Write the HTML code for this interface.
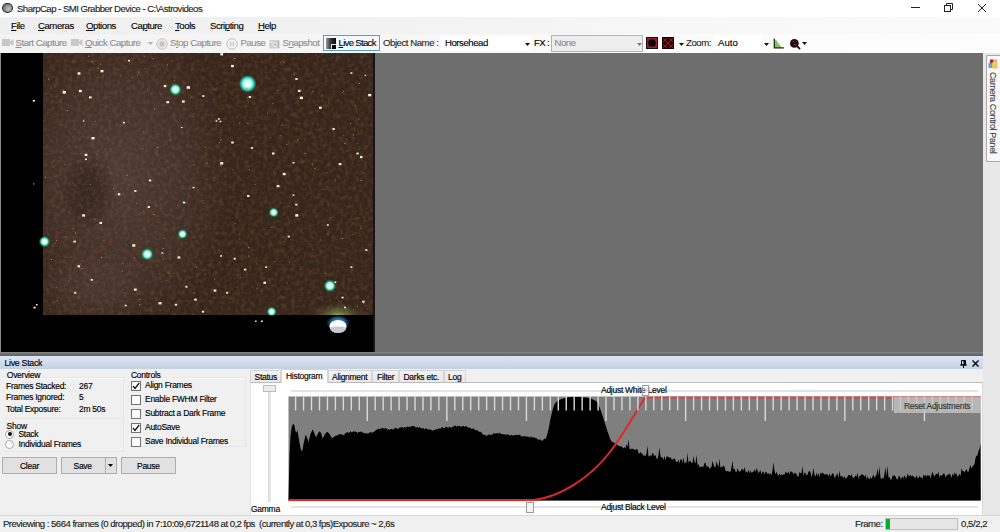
<!DOCTYPE html>
<html><head><meta charset="utf-8">
<style>
*{margin:0;padding:0;box-sizing:border-box}
html,body{width:1000px;height:532px;overflow:hidden;background:#f0f0f0}
body{position:relative;font-family:"Liberation Sans",sans-serif;color:#000}
.a{position:absolute}
.t{position:absolute;white-space:nowrap;font-size:9.6px;letter-spacing:-0.45px;line-height:9px;-webkit-text-stroke:0.12px currentColor}
.s{position:absolute;white-space:nowrap;font-size:8.5px;letter-spacing:-0.27px;line-height:8px;color:#000;-webkit-text-stroke:0.15px #000}
.u{text-decoration:underline;text-underline-offset:0.8px;text-decoration-thickness:0.8px}
#title{left:0;top:0;width:1000px;height:17px;background:#fff}
#menu{left:0;top:17px;width:1000px;height:17px;background:linear-gradient(90deg,#efefef 0%,#f2f2f2 40%,#f8f8f8 75%,#fafafa 100%)}
#tool{left:0;top:34px;width:1000px;height:19px;background:linear-gradient(90deg,#f3f3f3 0%,#f6f6f6 35%,#fbfbfb 65%,#fdfdfd 100%)}
.dis{color:#8e8e8e}
</style></head><body>
<!-- TITLE BAR -->
<div id="title" class="a">
  <div class="a" style="left:2px;top:2.9px;width:10.6px;height:10.5px;border-radius:50%;border:1.3px solid #2c2c2c;background:radial-gradient(circle at 62% 60%,#c4c8c4,#868c88 50%,#505450 100%)"></div>
  <div class="t" style="left:17px;top:4.2px;color:#1a1a1a;letter-spacing:-0.53px">SharpCap - SMI Grabber Device - C:\Astrovideos</div>
  <div class="a" style="left:911px;top:7px;width:9px;height:1px;background:#222"></div>
  <svg class="a" style="left:943px;top:3px" width="11" height="9" viewBox="0 0 11 9"><rect x="1.5" y="2.5" width="6" height="6" fill="none" stroke="#222"/><path d="M3.5 2.5V0.5H9.5V6.5H7.5" fill="none" stroke="#222"/></svg>
  <svg class="a" style="left:977px;top:3px" width="10" height="10" viewBox="0 0 10 10"><path d="M1 1L9 9M9 1L1 9" stroke="#222" stroke-width="1"/></svg>
</div>
<!-- MENU BAR -->
<div id="menu" class="a">
  <div class="t" style="left:11px;top:3.7px"><span class="u">F</span>ile</div>
  <div class="t" style="left:38px;top:3.7px"><span class="u">C</span>ameras</div>
  <div class="t" style="left:86px;top:3.7px"><span class="u">O</span>ptions</div>
  <div class="t" style="left:131px;top:3.7px">Ca<span class="u">p</span>ture</div>
  <div class="t" style="left:175px;top:3.7px"><span class="u">T</span>ools</div>
  <div class="t" style="left:210px;top:3.7px">Scri<span class="u">p</span>ting</div>
  <div class="t" style="left:258px;top:3.7px"><span class="u">H</span>elp</div>
</div>
<!-- TOOLBAR -->
<div id="tool" class="a">
  <!-- start capture icon -->
  <svg class="a" style="left:2px;top:4.4px" width="12" height="9" viewBox="0 0 12 9"><rect x="0" y="1" width="8" height="7" fill="#c8c8c8"/><path d="M8 3.5L11.5 1V8L8 5.5Z" fill="#c8c8c8"/></svg>
  <div class="t dis" style="left:15.5px;top:4.4px"><span class="u">S</span>tart Capture</div>
  <svg class="a" style="left:71px;top:4.4px" width="12" height="9" viewBox="0 0 12 9"><rect x="0" y="1" width="8" height="7" fill="#c8c8c8"/><path d="M8 3.5L11.5 1V8L8 5.5Z" fill="#c8c8c8"/></svg>
  <div class="t dis" style="left:85px;top:4.4px"><span class="u">Q</span>uick Capture</div>
  <svg class="a" style="left:148px;top:8px" width="5" height="3" viewBox="0 0 5 3"><path d="M0 0H5L2.5 3Z" fill="#b0b0b0"/></svg>
  <svg class="a" style="left:156px;top:4px" width="12" height="12" viewBox="0 0 12 12"><circle cx="6" cy="6" r="5.3" fill="#e8e8e8" stroke="#c8c8c8" stroke-width="1"/><rect x="3.6" y="3.4" width="4.8" height="5.2" rx="0.6" fill="#c4c4c4"/></svg>
  <div class="t dis" style="left:170px;top:4.4px">S<span class="u">t</span>op Capture</div>
  <svg class="a" style="left:226px;top:4px" width="12" height="12" viewBox="0 0 12 12"><circle cx="6" cy="6" r="5.3" fill="#f2f2f2" stroke="#c4c4c4" stroke-width="1"/><rect x="4.2" y="3.8" width="1" height="4.4" fill="#b8b8b8"/><rect x="6.8" y="3.8" width="1" height="4.4" fill="#b8b8b8"/></svg>
  <div class="t dis" style="left:240.5px;top:4.4px">Pause</div>
  <svg class="a" style="left:268.5px;top:4.5px" width="11" height="10" viewBox="0 0 11 10"><rect x="0.3" y="1" width="10.4" height="8.6" rx="1" fill="#cfcfcf"/><rect x="1.5" y="2.5" width="2" height="1.5" fill="#eee"/><circle cx="6" cy="5.6" r="2.6" fill="#e6e6e6"/><circle cx="6" cy="5.6" r="1.4" fill="#bdbdbd"/><rect x="8.5" y="2" width="1.5" height="6.5" fill="#b8b8b8"/></svg>
  <div class="t dis" style="left:282.5px;top:4.4px">S<span class="u">n</span>apshot</div>
  <!-- live stack button -->
  <div class="a" style="left:322.8px;top:1.2px;width:57.7px;height:15.5px;border:1px solid #5c9cbc;background:#f2f8fb"></div>
  <div class="a" style="left:325.5px;top:4px;width:10.5px;height:11px;background:linear-gradient(90deg,#9a9a9a 0%,#3a3a3a 45%,#0a0a0a 100%)"></div>
  <div class="a" style="left:330.5px;top:9.5px;width:5px;height:5.5px;background:#000;border:1px solid #e8e8e8;border-right:none;border-bottom:none"></div>
  <div class="t" style="left:338.5px;top:4.4px;letter-spacing:-0.7px"><span class="u">L</span>ive Stack</div>
  <div class="t" style="left:383px;top:4.4px;color:#1e1e1e">Object Name :</div>
  <div class="a" style="left:441px;top:2px;width:90px;height:15px;background:#fff"></div>
  <div class="t" style="left:445px;top:4.4px">Horsehead</div>
  <svg class="a" style="left:524.5px;top:8.5px" width="5" height="3" viewBox="0 0 5 3"><path d="M0 0H5L2.5 3Z" fill="#111"/></svg>
  <div class="t" style="left:534px;top:4.4px;letter-spacing:-0.6px">FX :</div>
  <div class="a" style="left:551px;top:1px;width:92px;height:16.5px;border:1px solid #b4b4b4;background:#eeeeee"></div>
  <div class="t dis" style="left:554.5px;top:4.4px;color:#8c8c8c">None</div>
  <svg class="a" style="left:636.5px;top:8.5px" width="5" height="3" viewBox="0 0 5 3"><path d="M0 0H5L2.5 3Z" fill="#777"/></svg>
  <!-- red icons -->
  <svg class="a" style="left:645.5px;top:3px" width="12" height="12" viewBox="0 0 12 12"><rect x="0" y="0" width="12" height="12" fill="#111"/><rect x="1" y="1" width="10" height="10" fill="#7a1422"/><rect x="1.8" y="1.8" width="8.4" height="8.4" fill="none" stroke="#c02a3c" stroke-width="0.6"/><circle cx="6" cy="6" r="3.6" fill="#050000"/></svg>
  <svg class="a" style="left:662px;top:3px" width="12" height="12" viewBox="0 0 12 12"><rect x="0" y="0" width="12" height="12" fill="#2a0205"/><path d="M0 0L12 12M12 0L0 12M0 6L6 0L12 6L6 12Z" stroke="#a0182a" stroke-width="0.9" fill="none"/><rect x="0.5" y="0.5" width="11" height="11" fill="none" stroke="#120000" stroke-width="1"/></svg>
  <svg class="a" style="left:678.5px;top:8.5px" width="5" height="3" viewBox="0 0 5 3"><path d="M0 0H5L2.5 3Z" fill="#111"/></svg>
  <div class="t" style="left:686px;top:4.4px;color:#1e1e1e">Zoom:</div>
  <div class="a" style="left:715px;top:2px;width:47px;height:15px;background:#fff"></div>
  <div class="t" style="left:718px;top:4.4px;letter-spacing:0">Auto</div>
  <svg class="a" style="left:763.5px;top:8.5px" width="5" height="3" viewBox="0 0 5 3"><path d="M0 0H5L2.5 3Z" fill="#111"/></svg>
  <!-- histogram icon -->
  <svg class="a" style="left:773px;top:4px" width="11" height="11" viewBox="0 0 11 11"><path d="M1.6 9.3V6 L2.4 1.5 L3.6 2.6 L5.5 5.4 L8 8.6 L8.5 9.3Z" fill="#86c060"/><path d="M1.3 0.5V9.8H10.8" fill="none" stroke="#14200c" stroke-width="1.2"/></svg>
  <!-- magnifier -->
  <svg class="a" style="left:789px;top:3.5px" width="12" height="12" viewBox="0 0 12 12"><circle cx="5.4" cy="5.4" r="4.4" fill="#2a0a0c"/><path d="M8 8L10.6 10.6" stroke="#2a0a0c" stroke-width="1.8" stroke-linecap="round"/><circle cx="4.6" cy="3.6" r="0.7" fill="#8a6a6a"/><circle cx="6" cy="6.6" r="0.7" fill="#8a6a6a"/></svg>
  <svg class="a" style="left:802px;top:8px" width="5" height="3" viewBox="0 0 5 3"><path d="M0 0H5L2.5 3Z" fill="#111"/></svg>

</div>
<!-- MAIN -->
<svg class="a" style="left:0;top:53px" width="375" height="299" viewBox="0 53 375 299">
<defs><radialGradient id="gg"><stop offset="0" stop-color="#ffffff"/><stop offset="0.38" stop-color="#d8fff0"/><stop offset="0.6" stop-color="#50e0b0"/><stop offset="0.82" stop-color="#1c8a60" stop-opacity="0.55"/><stop offset="1" stop-color="#1c7a58" stop-opacity="0"/></radialGradient><radialGradient id="gc"><stop offset="0" stop-color="#ffffff"/><stop offset="0.4" stop-color="#d0fff4"/><stop offset="0.65" stop-color="#40e8d0"/><stop offset="0.85" stop-color="#20b0a0" stop-opacity="0.6"/><stop offset="1" stop-color="#20a090" stop-opacity="0"/></radialGradient><radialGradient id="neb" cx="0.5" cy="0.5" r="0.5"><stop offset="0" stop-color="#2c1e18" stop-opacity="0.85"/><stop offset="0.6" stop-color="#2c1e18" stop-opacity="0.5"/><stop offset="1" stop-color="#2c1e18" stop-opacity="0"/></radialGradient><radialGradient id="haze" cx="0.5" cy="0.5" r="0.5"><stop offset="0" stop-color="#5e4a44" stop-opacity="0.6"/><stop offset="0.6" stop-color="#5a4540" stop-opacity="0.35"/><stop offset="1" stop-color="#5a4540" stop-opacity="0"/></radialGradient><radialGradient id="glow" cx="0.5" cy="0.5" r="0.5"><stop offset="0" stop-color="#c0f080" stop-opacity="0.85"/><stop offset="0.4" stop-color="#90b050" stop-opacity="0.45"/><stop offset="1" stop-color="#6a8040" stop-opacity="0"/></radialGradient><filter id="nz" x="0" y="0" width="1" height="1"><feTurbulence type="fractalNoise" baseFrequency="0.22" numOctaves="2" seed="3"/><feColorMatrix type="matrix" values="0 0 0 0 0.45  0 0 0 0 0.16  0 0 0 0 0.08  2.2 0 0 0 -1.0"/></filter><filter id="nz2" x="0" y="0" width="1" height="1"><feTurbulence type="fractalNoise" baseFrequency="0.25" numOctaves="2" seed="9"/><feColorMatrix type="matrix" values="0 0 0 0 0.22  0 0 0 0 0.28  0 0 0 0 0.12  0 2.2 0 0 -1.0"/></filter><radialGradient id="bglow" cx="0.5" cy="0.5" r="0.5"><stop offset="0" stop-color="#60c8ff"/><stop offset="0.6" stop-color="#3090d0" stop-opacity="0.7"/><stop offset="1" stop-color="#2070b0" stop-opacity="0"/></radialGradient></defs>
<rect x="0" y="53" width="375" height="299" fill="#000"/>
<rect x="43" y="53" width="330" height="262" fill="#37251b"/>
<clipPath id="cbr"><rect x="43" y="53" width="330" height="262"/></clipPath><g clip-path="url(#cbr)">
<ellipse cx="120" cy="175" rx="110" ry="160" fill="url(#haze)"/>
<ellipse cx="90" cy="290" rx="60" ry="40" fill="url(#haze)" opacity="0.6"/>
<ellipse cx="88" cy="192" rx="28" ry="40" fill="url(#neb)" opacity="0.85"/>
<ellipse cx="338" cy="317" rx="26" ry="14" fill="url(#glow)"/>
<rect x="43" y="53" width="330" height="262" filter="url(#nz)" opacity="0.22"/>
<rect x="43" y="53" width="330" height="262" filter="url(#nz2)" opacity="0.18"/>
</g>
<clipPath id="cb"><rect x="0" y="53" width="373" height="262.5"/></clipPath><g clip-path="url(#cb)">
<rect x="128.1" y="59.9" width="1.9" height="1.5" fill="#fff8e0"/>
<rect x="77.6" y="72.3" width="2.8" height="2.3" fill="#fff8e0"/>
<rect x="100.6" y="70.0" width="2.8" height="2.3" fill="#fff8e0"/>
<rect x="62.7" y="91.0" width="3.2" height="2.6" fill="#fff8e0"/>
<rect x="78.9" y="89.8" width="2.8" height="2.3" fill="#fff8e0"/>
<rect x="89.0" y="96.4" width="2.5" height="2.0" fill="#fff8e0"/>
<rect x="32.8" y="99.9" width="2.1" height="1.7" fill="#fff8e0"/>
<rect x="163.8" y="85.1" width="2.5" height="2.0" fill="#fff8e0"/>
<circle cx="175.4" cy="89.5" r="6.5" fill="url(#gg)"/>
<rect x="186.7" y="86.2" width="3.2" height="2.6" fill="#fff8e0"/>
<rect x="166.4" y="101.1" width="2.7" height="2.1" fill="#fff8e0"/>
<rect x="182.0" y="100.5" width="2.7" height="2.1" fill="#fff8e0"/>
<rect x="123.0" y="121.9" width="1.9" height="1.5" fill="#fff8e0"/>
<rect x="82.9" y="120.4" width="1.5" height="1.2" fill="#fff8e0"/>
<rect x="91.5" y="137.0" width="3.0" height="2.4" fill="#fff8e0"/>
<rect x="84.7" y="153.8" width="2.7" height="2.1" fill="#fff8e0"/>
<rect x="85.0" y="158.6" width="1.9" height="1.5" fill="#fff8e0"/>
<rect x="148.9" y="179.6" width="2.3" height="1.8" fill="#fff8e0"/>
<rect x="134.3" y="190.2" width="2.1" height="1.7" fill="#fff8e0"/>
<rect x="117.8" y="193.3" width="2.5" height="2.0" fill="#fff8e0"/>
<rect x="33.2" y="183.5" width="1.1" height="0.9" fill="#fff8e0"/>
<rect x="181.0" y="126.9" width="1.5" height="1.2" fill="#fff8e0"/>
<rect x="220.3" y="53.1" width="2.8" height="2.3" fill="#fff8e0"/>
<rect x="231.0" y="64.9" width="2.8" height="2.3" fill="#fff8e0"/>
<circle cx="247.6" cy="83.8" r="8.8" fill="url(#gc)"/>
<rect x="248.7" y="96.1" width="2.3" height="1.8" fill="#fff8e0"/>
<rect x="202.3" y="95.2" width="2.1" height="1.7" fill="#fff8e0"/>
<rect x="295.3" y="78.1" width="2.3" height="1.8" fill="#fff8e0"/>
<rect x="298.0" y="89.9" width="2.5" height="2.0" fill="#fff8e0"/>
<rect x="299.9" y="96.7" width="3.0" height="2.4" fill="#fff8e0"/>
<rect x="350.4" y="72.3" width="1.9" height="1.5" fill="#fff8e0"/>
<rect x="364.6" y="74.8" width="1.5" height="1.2" fill="#fff8e0"/>
<rect x="368.2" y="93.9" width="3.0" height="2.4" fill="#fff8e0"/>
<rect x="319.0" y="106.7" width="2.7" height="2.1" fill="#fff8e0"/>
<rect x="217.9" y="118.2" width="1.9" height="1.5" fill="#fff8e0"/>
<rect x="215.6" y="120.3" width="1.7" height="1.4" fill="#fff8e0"/>
<rect x="219.6" y="120.8" width="1.7" height="1.4" fill="#fff8e0"/>
<rect x="332.5" y="128.1" width="2.3" height="1.8" fill="#fff8e0"/>
<rect x="231.2" y="141.5" width="2.5" height="2.0" fill="#fff8e0"/>
<rect x="250.8" y="147.0" width="2.1" height="1.7" fill="#fff8e0"/>
<rect x="272.0" y="152.5" width="2.5" height="2.0" fill="#fff8e0"/>
<rect x="220.2" y="162.1" width="3.0" height="2.4" fill="#fff8e0"/>
<rect x="338.7" y="163.1" width="2.7" height="2.1" fill="#fff8e0"/>
<rect x="356.4" y="152.6" width="2.3" height="1.8" fill="#fff8e0"/>
<rect x="360.0" y="156.1" width="2.5" height="2.0" fill="#fff8e0"/>
<rect x="292.6" y="162.0" width="1.9" height="1.5" fill="#fff8e0"/>
<rect x="282.8" y="172.9" width="2.8" height="2.3" fill="#fff8e0"/>
<rect x="192.6" y="186.8" width="1.9" height="1.5" fill="#fff8e0"/>
<rect x="276.7" y="185.1" width="2.7" height="2.1" fill="#fff8e0"/>
<rect x="247.4" y="195.2" width="2.1" height="1.7" fill="#fff8e0"/>
<rect x="292.6" y="194.5" width="1.7" height="1.4" fill="#fff8e0"/>
<circle cx="44.5" cy="241.6" r="5.9" fill="url(#gg)"/>
<rect x="82.2" y="214.3" width="2.8" height="2.3" fill="#fff8e0"/>
<rect x="99.5" y="222.0" width="2.5" height="2.0" fill="#fff8e0"/>
<rect x="73.5" y="240.7" width="2.3" height="1.8" fill="#fff8e0"/>
<rect x="132.3" y="244.3" width="3.0" height="2.4" fill="#fff8e0"/>
<circle cx="147.3" cy="254.2" r="6.5" fill="url(#gg)"/>
<rect x="77.6" y="265.3" width="2.5" height="2.0" fill="#fff8e0"/>
<rect x="90.7" y="279.0" width="2.1" height="1.7" fill="#fff8e0"/>
<rect x="134.0" y="288.6" width="2.7" height="2.1" fill="#fff8e0"/>
<rect x="74.2" y="291.9" width="2.1" height="1.7" fill="#fff8e0"/>
<rect x="158.5" y="302.0" width="3.0" height="2.4" fill="#fff8e0"/>
<rect x="124.8" y="304.8" width="1.9" height="1.5" fill="#fff8e0"/>
<rect x="33.5" y="306.8" width="2.1" height="1.7" fill="#fff8e0"/>
<rect x="35.9" y="304.1" width="1.7" height="1.4" fill="#fff8e0"/>
<rect x="341.5" y="296.7" width="2.1" height="1.7" fill="#fff8e0"/>
<rect x="344.1" y="306.7" width="1.9" height="1.5" fill="#fff8e0"/>
<rect x="147.7" y="206.1" width="2.3" height="1.8" fill="#fff8e0"/>
<rect x="182.9" y="201.6" width="2.3" height="1.8" fill="#fff8e0"/>
<circle cx="182.5" cy="234.1" r="5.2" fill="url(#gg)"/>
<rect x="177.6" y="256.4" width="2.7" height="2.1" fill="#fff8e0"/>
<rect x="185.4" y="285.9" width="2.1" height="1.7" fill="#fff8e0"/>
<rect x="174.8" y="303.8" width="2.3" height="1.8" fill="#fff8e0"/>
<rect x="161.5" y="252.3" width="1.7" height="1.4" fill="#fff8e0"/>
<circle cx="273.7" cy="212.4" r="5.2" fill="url(#gg)"/>
<rect x="295.3" y="214.2" width="3.0" height="2.4" fill="#fff8e0"/>
<rect x="295.2" y="203.8" width="2.1" height="1.7" fill="#fff8e0"/>
<rect x="247.1" y="195.2" width="2.1" height="1.7" fill="#fff8e0"/>
<rect x="326.9" y="224.2" width="1.9" height="1.5" fill="#fff8e0"/>
<rect x="287.7" y="235.7" width="2.1" height="1.7" fill="#fff8e0"/>
<rect x="365.3" y="249.2" width="2.1" height="1.7" fill="#fff8e0"/>
<rect x="244.0" y="268.7" width="2.3" height="1.8" fill="#fff8e0"/>
<rect x="220.2" y="255.2" width="1.9" height="1.5" fill="#fff8e0"/>
<rect x="233.6" y="257.9" width="2.1" height="1.7" fill="#fff8e0"/>
<rect x="265.2" y="266.4" width="1.9" height="1.5" fill="#fff8e0"/>
<rect x="350.4" y="266.4" width="1.9" height="1.5" fill="#fff8e0"/>
<rect x="263.4" y="281.7" width="2.7" height="2.1" fill="#fff8e0"/>
<rect x="213.7" y="289.5" width="2.7" height="2.1" fill="#fff8e0"/>
<rect x="194.3" y="298.6" width="2.5" height="2.0" fill="#fff8e0"/>
<rect x="226.1" y="291.9" width="2.1" height="1.7" fill="#fff8e0"/>
<circle cx="329.9" cy="285.8" r="6.5" fill="url(#gg)"/>
<rect x="334.4" y="281.4" width="1.9" height="1.5" fill="#fff8e0"/>
<rect x="362.2" y="300.8" width="2.3" height="1.8" fill="#fff8e0"/>
<circle cx="271.6" cy="311.7" r="5.2" fill="url(#gg)"/>
<rect x="201.9" y="310.8" width="2.3" height="1.8" fill="#fff8e0"/>
<rect x="248.1" y="247.1" width="1" height="1" fill="#c09070"/>
<rect x="54.5" y="175.6" width="1" height="1" fill="#8a5a3a"/>
<rect x="256.6" y="288.3" width="1" height="1" fill="#9a6a48"/>
<rect x="166.2" y="279.9" width="1" height="1" fill="#7a6a4a"/>
<rect x="222.3" y="203.7" width="1" height="1" fill="#9a6a48"/>
<rect x="283.4" y="160.7" width="1" height="1" fill="#8a5a3a"/>
<rect x="343.7" y="253.3" width="1" height="1" fill="#8a5a3a"/>
<rect x="293.4" y="73.6" width="1" height="1" fill="#c09070"/>
<rect x="246.3" y="87.8" width="1" height="1" fill="#9a6a48"/>
<rect x="362.0" y="56.4" width="1" height="1" fill="#8a5a3a"/>
<rect x="358.0" y="98.0" width="1" height="1" fill="#8a5a3a"/>
<rect x="139.3" y="304.0" width="1" height="1" fill="#c09070"/>
<rect x="330.6" y="217.1" width="1" height="1" fill="#8a5a3a"/>
<rect x="351.8" y="233.9" width="1" height="1" fill="#7a6a4a"/>
<rect x="142.4" y="148.5" width="1" height="1" fill="#8a5a3a"/>
<rect x="350.1" y="123.3" width="1" height="1" fill="#b88050"/>
<rect x="143.2" y="211.2" width="1" height="1" fill="#9a6a48"/>
<rect x="239.3" y="238.3" width="1" height="1" fill="#9a6a48"/>
<rect x="146.0" y="267.0" width="1" height="1" fill="#7a6a4a"/>
<rect x="272.0" y="102.9" width="1" height="1" fill="#7a6a4a"/>
<rect x="274.7" y="69.8" width="1" height="1" fill="#9a6a48"/>
<rect x="354.4" y="147.6" width="1" height="1" fill="#7a6a4a"/>
<rect x="50.9" y="259.0" width="1" height="1" fill="#b88050"/>
<rect x="167.7" y="272.9" width="1" height="1" fill="#7a6a4a"/>
<rect x="60.2" y="101.9" width="1" height="1" fill="#8a5a3a"/>
<rect x="83.8" y="118.7" width="1" height="1" fill="#7a6a4a"/>
<rect x="157.3" y="146.9" width="1" height="1" fill="#c09070"/>
<rect x="126.8" y="174.9" width="1" height="1" fill="#c09070"/>
<rect x="289.0" y="261.5" width="1" height="1" fill="#b88050"/>
<rect x="56.9" y="300.0" width="1" height="1" fill="#9a6a48"/>
<rect x="113.0" y="187.8" width="1" height="1" fill="#b88050"/>
<rect x="344.3" y="143.0" width="1" height="1" fill="#c09070"/>
<rect x="75.0" y="232.7" width="1" height="1" fill="#b88050"/>
<rect x="102.9" y="75.3" width="1" height="1" fill="#8a5a3a"/>
<rect x="280.1" y="135.1" width="1" height="1" fill="#7a6a4a"/>
<rect x="97.7" y="67.6" width="1" height="1" fill="#c09070"/>
<rect x="218.9" y="160.1" width="1" height="1" fill="#8a5a3a"/>
<rect x="286.4" y="144.1" width="1" height="1" fill="#b88050"/>
<rect x="193.5" y="164.2" width="1" height="1" fill="#9a6a48"/>
<rect x="364.2" y="220.3" width="1" height="1" fill="#7a6a4a"/>
<rect x="153.9" y="108.6" width="1" height="1" fill="#c09070"/>
<rect x="354.6" y="218.3" width="1" height="1" fill="#7a6a4a"/>
<rect x="79.8" y="167.5" width="1" height="1" fill="#8a5a3a"/>
<rect x="64.2" y="163.9" width="1" height="1" fill="#8a5a3a"/>
<rect x="192.7" y="313.8" width="1" height="1" fill="#8a5a3a"/>
<rect x="363.2" y="172.5" width="1" height="1" fill="#7a6a4a"/>
<rect x="269.6" y="137.3" width="1" height="1" fill="#b88050"/>
<rect x="139.9" y="159.6" width="1" height="1" fill="#8a5a3a"/>
<rect x="81.7" y="267.9" width="1" height="1" fill="#c09070"/>
<rect x="357.9" y="217.4" width="1" height="1" fill="#7a6a4a"/>
<rect x="327.9" y="101.7" width="1" height="1" fill="#7a6a4a"/>
<rect x="133.8" y="257.5" width="1" height="1" fill="#c09070"/>
<rect x="162.8" y="258.6" width="1" height="1" fill="#b88050"/>
<rect x="271.4" y="227.0" width="1" height="1" fill="#b88050"/>
<rect x="163.5" y="237.5" width="1" height="1" fill="#b88050"/>
<rect x="317.3" y="123.6" width="1" height="1" fill="#b88050"/>
<rect x="356.9" y="143.1" width="1" height="1" fill="#8a5a3a"/>
<rect x="234.3" y="58.0" width="1" height="1" fill="#c09070"/>
<rect x="297.2" y="139.4" width="1" height="1" fill="#b88050"/>
<rect x="195.9" y="266.5" width="1" height="1" fill="#b88050"/>
<rect x="158.4" y="221.8" width="1" height="1" fill="#7a6a4a"/>
<rect x="159.1" y="273.3" width="1" height="1" fill="#7a6a4a"/>
<rect x="363.2" y="302.7" width="1" height="1" fill="#c09070"/>
<rect x="91.2" y="308.9" width="1" height="1" fill="#8a5a3a"/>
<rect x="317.7" y="297.8" width="1" height="1" fill="#7a6a4a"/>
<rect x="137.2" y="75.4" width="1" height="1" fill="#7a6a4a"/>
<rect x="101.0" y="257.1" width="1" height="1" fill="#c09070"/>
<rect x="213.4" y="297.5" width="1" height="1" fill="#b88050"/>
<rect x="248.3" y="255.6" width="1" height="1" fill="#b88050"/>
<rect x="279.9" y="62.2" width="1" height="1" fill="#8a5a3a"/>
<rect x="236.2" y="216.6" width="1" height="1" fill="#8a5a3a"/>
<rect x="116.4" y="232.7" width="1" height="1" fill="#9a6a48"/>
<rect x="366.6" y="308.8" width="1" height="1" fill="#8a5a3a"/>
<rect x="62.7" y="89.6" width="1" height="1" fill="#b88050"/>
<rect x="360.6" y="180.0" width="1" height="1" fill="#c09070"/>
<rect x="56.6" y="175.5" width="1" height="1" fill="#7a6a4a"/>
<rect x="261.0" y="73.6" width="1" height="1" fill="#8a5a3a"/>
<rect x="122.5" y="288.9" width="1" height="1" fill="#9a6a48"/>
<rect x="159.3" y="301.6" width="1" height="1" fill="#7a6a4a"/>
<rect x="327.4" y="233.4" width="1" height="1" fill="#c09070"/>
<rect x="166.9" y="64.3" width="1" height="1" fill="#c09070"/>
<rect x="143.3" y="131.5" width="1" height="1" fill="#c09070"/>
<rect x="155.6" y="205.5" width="1" height="1" fill="#b88050"/>
<rect x="311.8" y="163.5" width="1" height="1" fill="#c09070"/>
<rect x="254.4" y="150.7" width="1" height="1" fill="#8a5a3a"/>
<rect x="96.1" y="154.1" width="1" height="1" fill="#7a6a4a"/>
<rect x="357.1" y="305.7" width="1" height="1" fill="#c09070"/>
<rect x="74.6" y="267.7" width="1" height="1" fill="#9a6a48"/>
<rect x="169.5" y="139.4" width="1" height="1" fill="#c09070"/>
<rect x="220.9" y="139.3" width="1" height="1" fill="#c09070"/>
<rect x="167.5" y="166.8" width="1" height="1" fill="#8a5a3a"/>
<rect x="205.9" y="179.2" width="1" height="1" fill="#7a6a4a"/>
<rect x="170.1" y="276.4" width="1" height="1" fill="#8a5a3a"/>
<rect x="239.2" y="122.3" width="1" height="1" fill="#b88050"/>
<rect x="206.8" y="162.6" width="1" height="1" fill="#b88050"/>
<rect x="353.1" y="134.6" width="1" height="1" fill="#b88050"/>
<rect x="91.7" y="61.2" width="1" height="1" fill="#c09070"/>
<rect x="358.2" y="118.6" width="1" height="1" fill="#9a6a48"/>
<rect x="299.8" y="269.1" width="1" height="1" fill="#9a6a48"/>
<rect x="201.6" y="200.1" width="1" height="1" fill="#8a5a3a"/>
<rect x="349.9" y="257.5" width="1" height="1" fill="#8a5a3a"/>
<rect x="204.8" y="273.6" width="1" height="1" fill="#b88050"/>
<rect x="140.6" y="212.5" width="1" height="1" fill="#7a6a4a"/>
<rect x="213.9" y="278.6" width="1" height="1" fill="#9a6a48"/>
<rect x="50.3" y="87.6" width="1" height="1" fill="#b88050"/>
<rect x="218.9" y="142.1" width="1" height="1" fill="#b88050"/>
<rect x="283.4" y="61.9" width="1" height="1" fill="#b88050"/>
<rect x="162.7" y="248.0" width="1" height="1" fill="#c09070"/>
<rect x="88.2" y="55.7" width="1" height="1" fill="#c09070"/>
<rect x="193.5" y="292.4" width="1" height="1" fill="#c09070"/>
<rect x="107.3" y="166.3" width="1" height="1" fill="#7a6a4a"/>
<rect x="238.9" y="233.5" width="1" height="1" fill="#7a6a4a"/>
<rect x="324.9" y="272.9" width="1" height="1" fill="#7a6a4a"/>
<rect x="172.7" y="275.6" width="1" height="1" fill="#8a5a3a"/>
<rect x="338.0" y="175.5" width="1" height="1" fill="#9a6a48"/>
<rect x="144.0" y="55.8" width="1" height="1" fill="#7a6a4a"/>
<rect x="234.8" y="222.9" width="1" height="1" fill="#7a6a4a"/>
<rect x="341.9" y="92.0" width="1" height="1" fill="#7a6a4a"/>
<rect x="271.6" y="285.2" width="1" height="1" fill="#b88050"/>
<rect x="220.4" y="165.2" width="1" height="1" fill="#c09070"/>
<rect x="309.7" y="72.7" width="1" height="1" fill="#8a5a3a"/>
<rect x="132.1" y="77.1" width="1" height="1" fill="#9a6a48"/>
<rect x="261.3" y="61.6" width="1" height="1" fill="#7a6a4a"/>
<rect x="364.1" y="313.6" width="1" height="1" fill="#7a6a4a"/>
<rect x="60.9" y="273.1" width="1" height="1" fill="#8a5a3a"/>
<rect x="245.3" y="268.5" width="1" height="1" fill="#9a6a48"/>
<rect x="277.3" y="89.9" width="1" height="1" fill="#b88050"/>
<rect x="275.1" y="168.4" width="1" height="1" fill="#8a5a3a"/>
<rect x="244.1" y="162.2" width="1" height="1" fill="#8a5a3a"/>
<rect x="66.9" y="110.2" width="1" height="1" fill="#c09070"/>
<rect x="80.3" y="153.2" width="1" height="1" fill="#9a6a48"/>
<rect x="136.2" y="202.9" width="1" height="1" fill="#9a6a48"/>
<rect x="287.0" y="282.5" width="1" height="1" fill="#8a5a3a"/>
<rect x="48.2" y="78.7" width="1" height="1" fill="#c09070"/>
<rect x="204.6" y="146.5" width="1" height="1" fill="#b88050"/>
<rect x="343.2" y="90.8" width="1" height="1" fill="#b88050"/>
<rect x="94.3" y="218.5" width="1" height="1" fill="#c09070"/>
<rect x="139.6" y="299.0" width="1" height="1" fill="#c09070"/>
<rect x="247.4" y="123.2" width="1" height="1" fill="#c09070"/>
<rect x="121.8" y="270.6" width="1" height="1" fill="#b88050"/>
<rect x="213.5" y="89.6" width="1" height="1" fill="#8a5a3a"/>
<rect x="326.5" y="172.4" width="1" height="1" fill="#7a6a4a"/>
<rect x="103.5" y="239.7" width="1" height="1" fill="#b88050"/>
<rect x="72.8" y="228.0" width="1" height="1" fill="#9a6a48"/>
<rect x="326.5" y="186.2" width="1" height="1" fill="#7a6a4a"/>
<rect x="122.8" y="282.1" width="1" height="1" fill="#7a6a4a"/>
<rect x="359.0" y="82.9" width="1" height="1" fill="#c09070"/>
<rect x="54.6" y="242.8" width="1" height="1" fill="#9a6a48"/>
<rect x="321.5" y="299.7" width="1" height="1" fill="#7a6a4a"/>
<rect x="267.0" y="112.8" width="1" height="1" fill="#9a6a48"/>
<rect x="72.3" y="291.1" width="1" height="1" fill="#7a6a4a"/>
<rect x="312.5" y="91.2" width="1" height="1" fill="#c09070"/>
<rect x="167.5" y="271.5" width="1" height="1" fill="#b88050"/>
<rect x="153.6" y="214.0" width="1" height="1" fill="#b88050"/>
<rect x="304.5" y="152.9" width="1" height="1" fill="#b88050"/>
<rect x="256.2" y="263.4" width="1" height="1" fill="#7a6a4a"/>
<rect x="358.4" y="148.8" width="1" height="1" fill="#9a6a48"/>
<rect x="238.2" y="203.5" width="1" height="1" fill="#8a5a3a"/>
<rect x="173.9" y="80.1" width="1" height="1" fill="#9a6a48"/>
<rect x="105.7" y="105.7" width="1" height="1" fill="#7a6a4a"/>
<rect x="334.9" y="179.6" width="1" height="1" fill="#b88050"/>
<rect x="45.1" y="176.8" width="1" height="1" fill="#c09070"/>
<rect x="345.5" y="138.7" width="1" height="1" fill="#7a6a4a"/>
<rect x="77.5" y="95.1" width="1" height="1" fill="#8a5a3a"/>
<rect x="68.2" y="280.1" width="1" height="1" fill="#7a6a4a"/>
<rect x="94.6" y="120.8" width="1" height="1" fill="#b88050"/>
<rect x="311.8" y="249.3" width="1" height="1" fill="#8a5a3a"/>
<rect x="55.8" y="287.2" width="1" height="1" fill="#b88050"/>
<rect x="346.4" y="150.6" width="1" height="1" fill="#9a6a48"/>
<rect x="269.2" y="229.5" width="1" height="1" fill="#7a6a4a"/>
<rect x="321.7" y="95.4" width="1" height="1" fill="#b88050"/>
<rect x="139.9" y="229.7" width="1" height="1" fill="#8a5a3a"/>
<rect x="55.9" y="240.1" width="1" height="1" fill="#c09070"/>
<rect x="120.1" y="75.3" width="1" height="1" fill="#7a6a4a"/>
<rect x="342.2" y="238.0" width="1" height="1" fill="#b88050"/>
<rect x="105.1" y="148.6" width="1" height="1" fill="#9a6a48"/>
<rect x="283.7" y="240.9" width="1" height="1" fill="#8a5a3a"/>
<rect x="297.9" y="100.5" width="1" height="1" fill="#8a5a3a"/>
<rect x="351.6" y="222.3" width="1" height="1" fill="#7a6a4a"/>
<rect x="281.8" y="125.1" width="1" height="1" fill="#7a6a4a"/>
<rect x="64.8" y="256.8" width="1" height="1" fill="#7a6a4a"/>
<rect x="100.3" y="63.6" width="1" height="1" fill="#c09070"/>
<rect x="229.3" y="298.3" width="1" height="1" fill="#9a6a48"/>
<rect x="122.3" y="263.0" width="1" height="1" fill="#9a6a48"/>
<rect x="350.1" y="68.9" width="1" height="1" fill="#8a5a3a"/>
<rect x="255.0" y="183.8" width="1" height="1" fill="#9a6a48"/>
<rect x="60.6" y="270.9" width="1" height="1" fill="#7a6a4a"/>
<rect x="144.7" y="68.3" width="1" height="1" fill="#9a6a48"/>
<rect x="354.7" y="105.4" width="1" height="1" fill="#c09070"/>
<rect x="253.8" y="103.7" width="1" height="1" fill="#8a5a3a"/>
<rect x="72.5" y="136.3" width="1" height="1" fill="#9a6a48"/>
<rect x="73.3" y="310.2" width="1" height="1" fill="#8a5a3a"/>
<rect x="240.0" y="276.9" width="1" height="1" fill="#8a5a3a"/>
<rect x="248.7" y="169.3" width="1" height="1" fill="#b88050"/>
<rect x="203.6" y="203.0" width="1" height="1" fill="#7a6a4a"/>
<rect x="215.3" y="89.4" width="1" height="1" fill="#9a6a48"/>
<rect x="342.6" y="134.7" width="1" height="1" fill="#7a6a4a"/>
<rect x="335.6" y="313.9" width="1" height="1" fill="#c09070"/>
<rect x="82.7" y="135.7" width="1" height="1" fill="#9a6a48"/>
<rect x="299.2" y="123.2" width="1" height="1" fill="#7a6a4a"/>
<rect x="147.0" y="88.6" width="1" height="1" fill="#9a6a48"/>
<rect x="198.7" y="235.6" width="1" height="1" fill="#7a6a4a"/>
<rect x="360.5" y="227.6" width="1" height="1" fill="#b88050"/>
<rect x="65.0" y="236.5" width="1" height="1" fill="#9a6a48"/>
<rect x="274.4" y="261.2" width="1" height="1" fill="#b88050"/>
<rect x="333.7" y="73.6" width="1" height="1" fill="#b88050"/>
<rect x="168.8" y="254.2" width="1" height="1" fill="#9a6a48"/>
<rect x="337.1" y="224.4" width="1" height="1" fill="#8a5a3a"/>
<rect x="232.4" y="169.5" width="1" height="1" fill="#9a6a48"/>
<rect x="282.3" y="236.6" width="1" height="1" fill="#b88050"/>
<rect x="79.7" y="263.6" width="1" height="1" fill="#c09070"/>
<rect x="87.5" y="72.1" width="1" height="1" fill="#8a5a3a"/>
<rect x="89.8" y="183.9" width="1" height="1" fill="#b88050"/>
<rect x="138.1" y="71.5" width="1" height="1" fill="#c09070"/>
<rect x="54.1" y="86.5" width="1" height="1" fill="#8a5a3a"/>
<rect x="314.4" y="167.9" width="1" height="1" fill="#b88050"/>
<rect x="354.4" y="213.5" width="1" height="1" fill="#8a5a3a"/>
<rect x="216.9" y="87.5" width="1" height="1" fill="#8a5a3a"/>
<rect x="152.7" y="58.2" width="1" height="1" fill="#c09070"/>
<rect x="246.9" y="97.3" width="1" height="1" fill="#9a6a48"/>
</g>
<rect x="255" y="320.5" width="1.6" height="1.4" fill="#ddd"/><rect x="261" y="320.5" width="1.8" height="1.5" fill="#eee"/>
<ellipse cx="338" cy="323" rx="12" ry="8" fill="url(#bglow)"/>
<ellipse cx="338" cy="326.3" rx="8.5" ry="6.3" fill="#fcfcff"/>
<path d="M329.6 327.5 Q338 325.5 346.6 327.5 Q345 333 338 333 Q331 333 329.6 327.5Z" fill="#c8c8d4"/>
<rect x="373" y="53" width="2" height="299" fill="#151515"/>
</svg>
<div class="a" style="left:375px;top:53px;width:607.5px;height:299px;background:#6e6e6e"></div>
<div class="a" style="left:982.5px;top:53px;width:17.5px;height:462px;background:#e8e8e8"></div>
<div class="a" style="left:985.5px;top:55px;width:16px;height:106.5px;border:1px solid #a8a8a8;border-right:none;border-radius:2px 0 0 2px;background:#f7f7f7"></div>
<svg class="a" style="left:988px;top:59px" width="10" height="10" viewBox="0 0 10 10"><rect x="2" y="0.5" width="3.5" height="3.5" fill="#8a3030"/><rect x="5.5" y="0.5" width="3.5" height="3" fill="#e0b070"/><rect x="0.5" y="4" width="3.5" height="5" fill="#7898c8"/><rect x="4" y="3.5" width="5.5" height="6" fill="#e8c860"/></svg>
<div class="t" style="left:997px;top:72px;transform-origin:0 0;transform:rotate(90deg);color:#444;font-size:9px;letter-spacing:-0.38px">Camera Control Panel</div>
<div class="a" style="left:0;top:352px;width:982.5px;height:4px;background:linear-gradient(180deg,#8a8a8a 0%,#747474 35%,#666869 70%,#5e6266 100%)"></div>
<div class="a" style="left:0;top:53px;width:1px;height:299px;background:#8a8a8a"></div>

<!-- LIVE STACK PANEL -->
<div class="a" style="left:0;top:356px;width:982.5px;height:159px;background:#f0f0f0"></div>
<div class="a" style="left:0;top:356px;width:982.5px;height:12.5px;background:linear-gradient(180deg,#dae6f3 0%,#d0dced 55%,#c3d1e2 100%)"></div>
<div class="s" style="left:4.5px;top:358.9px;font-size:8.8px;letter-spacing:-0.3px">Live Stack</div>
<!-- pin -->
<svg class="a" style="left:960px;top:359.5px" width="7" height="8" viewBox="0 0 7 8"><path d="M1.5 0.5H5.5V5H1.5Z" fill="none" stroke="#000" stroke-width="1"/><rect x="3.5" y="0.5" width="1.5" height="4.5" fill="#000"/><path d="M0 5H7" stroke="#000" stroke-width="1"/><path d="M3.5 5V8" stroke="#000" stroke-width="1"/></svg>
<svg class="a" style="left:972px;top:360px" width="7" height="7" viewBox="0 0 7 7"><path d="M0.5 0.5L6.5 6.5M6.5 0.5L0.5 6.5" stroke="#000" stroke-width="1.4"/></svg>
<!-- overview group -->
<div class="a" style="left:2.5px;top:376.5px;width:121px;height:42px;border:1px solid #e7e7e7;border-left:none;box-shadow:inset 0 1px 0 #fafafa"></div>
<div class="a" style="left:2.5px;top:418.5px;width:121px;height:33px;border:1px solid #e7e7e7;border-top:none;border-left:none"></div>
<div class="a" style="left:129px;top:376.5px;width:117px;height:70.5px;border:1px solid #e7e7e7;border-left:none;box-shadow:inset 0 1px 0 #fafafa"></div>
<div class="s" style="left:6.8px;top:371px">Overview</div>
<div class="s" style="left:6px;top:381.5px">Frames Stacked:</div><div class="s" style="left:79px;top:381.5px">267</div>
<div class="s" style="left:6px;top:393px">Frames Ignored:</div><div class="s" style="left:79px;top:393px">5</div>
<div class="s" style="left:6px;top:404.5px">Total Exposure:</div><div class="s" style="left:79px;top:404.5px">2m 50s</div>
<div class="s" style="left:6.6px;top:422px">Show</div>
<div class="a" style="left:5px;top:429.5px;width:9px;height:9px;border-radius:50%;border:1px solid #a8a8a8;background:#fff"></div>
<div class="a" style="left:7.5px;top:432px;width:4px;height:4px;border-radius:50%;background:#111"></div>
<div class="s" style="left:18.4px;top:430px">Stack</div>
<div class="a" style="left:5px;top:440px;width:9px;height:9px;border-radius:50%;border:1px solid #a8a8a8;background:#fff"></div>
<div class="s" style="left:18.4px;top:439.5px">Individual Frames</div>
<!-- controls group -->

<div class="s" style="left:131px;top:371px">Controls</div>
<div class="a" style="left:131px;top:381px;width:10px;height:10px;border:1px solid #707070;background:#fff"></div>
<svg class="a" style="left:131px;top:381px" width="10" height="10" viewBox="0 0 10 10"><path d="M2 5L4 7.5L8.2 2" fill="none" stroke="#111" stroke-width="1.3"/></svg>
<div class="s" style="left:145px;top:380.5px">Align Frames</div>
<div class="a" style="left:131px;top:394.8px;width:10px;height:10px;border:1px solid #707070;background:#fff"></div>
<div class="s" style="left:145px;top:395px">Enable FWHM Filter</div>
<div class="a" style="left:131px;top:408.7px;width:10px;height:10px;border:1px solid #707070;background:#fff"></div>
<div class="s" style="left:145px;top:409px">Subtract a Dark Frame</div>
<div class="a" style="left:131px;top:422.6px;width:10px;height:10px;border:1px solid #707070;background:#fff"></div>
<svg class="a" style="left:131px;top:422.6px" width="10" height="10" viewBox="0 0 10 10"><path d="M2 5L4 7.5L8.2 2" fill="none" stroke="#111" stroke-width="1.3"/></svg>
<div class="s" style="left:145px;top:423px">AutoSave</div>
<div class="a" style="left:131px;top:436.5px;width:10px;height:10px;border:1px solid #707070;background:#fff"></div>
<div class="s" style="left:145px;top:436.5px">Save Individual Frames</div>
<!-- buttons -->
<div class="a" style="left:2px;top:457px;width:55px;height:16.5px;border:1px solid #adadad;background:#e1e1e1"></div>
<div class="s" style="left:20px;top:461.6px">Clear</div>
<div class="a" style="left:61px;top:457px;width:55.5px;height:16.5px;border:1px solid #adadad;background:#e1e1e1"></div>
<div class="a" style="left:104.5px;top:457px;width:1px;height:16.5px;background:#adadad"></div>
<div class="s" style="left:73.5px;top:461.6px">Save</div>
<svg class="a" style="left:108px;top:464px" width="5" height="3" viewBox="0 0 5 3"><path d="M0 0H5L2.5 3Z" fill="#000"/></svg>
<div class="a" style="left:121px;top:456.5px;width:54.5px;height:17px;border:1px solid #adadad;background:#e1e1e1"></div>
<div class="s" style="left:137px;top:461.6px">Pause</div>
<!-- tab control -->
<div class="a" style="left:249.5px;top:382px;width:733px;height:133px;background:#fff;border:1px solid #bcbcbc;border-left:1px solid #e2e2e2;border-bottom:none;border-right:1px solid #d8d8d8"></div>
<div class="a" style="left:249.8px;top:370.2px;width:31px;height:12.3px;border:1px solid #d4d4d4;border-bottom:none;background:linear-gradient(#f2f2f2,#e8e8e8)"></div>
<div class="s" style="left:254.5px;top:373px">Status</div>
<div class="a" style="left:280.7px;top:369px;width:47.5px;height:14px;border:1px solid #d4d4d4;border-bottom:none;background:#fff"></div>
<div class="s" style="left:286px;top:371.5px">Histogram</div>
<div class="a" style="left:328px;top:370.2px;width:43.5px;height:12.3px;border:1px solid #d4d4d4;border-bottom:none;background:linear-gradient(#f2f2f2,#e8e8e8)"></div>
<div class="s" style="left:332px;top:373px">Alignment</div>
<div class="a" style="left:371.5px;top:370.2px;width:27.5px;height:12.3px;border:1px solid #d4d4d4;border-bottom:none;background:linear-gradient(#f2f2f2,#e8e8e8)"></div>
<div class="s" style="left:377px;top:373px">Filter</div>
<div class="a" style="left:399px;top:370.2px;width:44.5px;height:12.3px;border:1px solid #d4d4d4;border-bottom:none;background:linear-gradient(#f2f2f2,#e8e8e8)"></div>
<div class="s" style="left:403.5px;top:373px">Darks etc.</div>
<div class="a" style="left:443.5px;top:370.2px;width:22.5px;height:12.3px;border:1px solid #d4d4d4;border-bottom:none;background:linear-gradient(#f2f2f2,#e8e8e8)"></div>
<div class="s" style="left:448px;top:373px">Log</div>
<!-- gamma slider -->
<div class="a" style="left:263px;top:384.5px;width:12.5px;height:7.5px;border:1px solid #bcbcbc;background:#ececec"></div>
<div class="a" style="left:268px;top:392px;width:2.5px;height:110px;background:#e6e6e6;border-left:1px solid #dadada"></div>
<div class="s" style="left:251px;top:504.5px">Gamma</div>
<!-- sliders tracks -->
<div class="a" style="left:290.5px;top:389.5px;width:687px;height:2.5px;background:#e4e4e4"></div>
<div class="s" style="left:601px;top:386px">Adjust White Level</div>
<div class="a" style="left:641.5px;top:384.5px;width:7.5px;height:11px;border:1px solid #a0a0a0;background:rgba(255,255,255,0.25)"></div>
<div class="a" style="left:290.5px;top:505.5px;width:687px;height:2.5px;background:#e4e4e4"></div>
<div class="s" style="left:601px;top:503px">Adjust Black Level</div>
<div class="a" style="left:526px;top:501.5px;width:8px;height:11px;border:1px solid #9a9a9a;background:#f4f4f4"></div>
<svg class="a" style="left:0;top:0" width="1000" height="532" viewBox="0 0 1000 532">
<rect x="288.5" y="396.5" width="692.2" height="104" fill="#7f7f7f"/>
<path d="M288.5 500.5 L288.5 500.0 L289.5 455.0 L290.5 436.0 L291.5 428.0 L292.5 425.1 L293.5 423.7 L294.5 426.0 L295.5 431.3 L296.5 432.7 L297.5 430.0 L298.5 436.7 L299.5 442.7 L300.5 448.0 L301.5 451.3 L302.5 450.0 L303.5 444.0 L304.5 439.5 L305.5 435.0 L306.5 436.3 L307.5 438.7 L308.5 442.0 L309.5 438.0 L310.5 434.0 L311.5 431.8 L312.5 429.5 L313.5 431.2 L314.5 433.5 L315.5 436.5 L316.5 436.8 L317.5 434.2 L318.5 432.4 L319.5 431.3 L320.5 432.2 L321.5 434.0 L322.5 438.5 L323.5 436.8 L324.5 435.0 L325.5 433.6 L326.5 432.2 L327.5 432.0 L328.5 433.0 L329.5 434.0 L330.5 435.8 L331.5 437.6 L332.5 438.1 L333.5 437.2 L334.5 436.4 L335.5 435.7 L336.5 435.4 L337.5 435.6 L338.5 434.4 L339.5 434.1 L340.5 434.4 L341.5 434.1 L342.5 434.9 L343.5 434.9 L344.5 434.6 L345.5 432.9 L346.5 432.7 L347.5 432.1 L348.5 432.9 L349.5 432.5 L350.5 431.1 L351.5 432.4 L352.5 432.0 L353.5 431.3 L354.5 431.7 L355.5 431.6 L356.5 431.9 L357.5 432.9 L358.5 431.9 L359.5 431.9 L360.5 431.7 L361.5 431.4 L362.5 432.4 L363.5 432.7 L364.5 433.6 L365.5 433.2 L366.5 433.6 L367.5 433.5 L368.5 433.4 L369.5 432.6 L370.5 431.9 L371.5 432.7 L372.5 432.4 L373.5 431.9 L374.5 431.5 L375.5 430.5 L376.5 429.8 L377.5 429.4 L378.5 428.6 L379.5 429.3 L380.5 428.3 L381.5 428.7 L382.5 427.6 L383.5 428.6 L384.5 428.8 L385.5 427.7 L386.5 428.4 L387.5 429.7 L388.5 429.1 L389.5 430.0 L390.5 429.2 L391.5 428.8 L392.5 429.5 L393.5 429.4 L394.5 428.3 L395.5 427.8 L396.5 428.1 L397.5 429.1 L398.5 428.7 L399.5 427.6 L400.5 427.6 L401.5 427.3 L402.5 427.1 L403.5 428.2 L404.5 427.0 L405.5 427.5 L406.5 427.2 L407.5 426.6 L408.5 427.3 L409.5 426.2 L410.5 426.9 L411.5 425.9 L412.5 426.3 L413.5 426.1 L414.5 426.3 L415.5 427.6 L416.5 427.4 L417.5 426.8 L418.5 428.0 L419.5 427.1 L420.5 427.7 L421.5 428.6 L422.5 428.5 L423.5 427.8 L424.5 429.4 L425.5 428.3 L426.5 428.5 L427.5 429.6 L428.5 429.2 L429.5 429.5 L430.5 429.5 L431.5 429.9 L432.5 430.9 L433.5 429.9 L434.5 430.1 L435.5 429.4 L436.5 429.1 L437.5 429.6 L438.5 428.6 L439.5 428.5 L440.5 428.7 L441.5 427.4 L442.5 427.1 L443.5 428.3 L444.5 428.0 L445.5 427.0 L446.5 426.8 L447.5 427.6 L448.5 427.8 L449.5 426.6 L450.5 427.7 L451.5 427.4 L452.5 426.9 L453.5 426.4 L454.5 425.8 L455.5 425.6 L456.5 426.9 L457.5 425.6 L458.5 426.4 L459.5 425.8 L460.5 426.8 L461.5 426.5 L462.5 426.1 L463.5 426.0 L464.5 427.0 L465.5 426.1 L466.5 426.4 L467.5 427.0 L468.5 427.8 L469.5 427.8 L470.5 427.7 L471.5 429.2 L472.5 428.5 L473.5 428.6 L474.5 429.4 L475.5 430.1 L476.5 429.9 L477.5 430.5 L478.5 431.2 L479.5 431.9 L480.5 431.7 L481.5 432.6 L482.5 434.1 L483.5 434.8 L484.5 434.8 L485.5 435.4 L486.5 435.8 L487.5 435.2 L488.5 434.7 L489.5 434.2 L490.5 435.3 L491.5 434.5 L492.5 434.7 L493.5 433.0 L494.5 433.8 L495.5 433.4 L496.5 433.6 L497.5 432.8 L498.5 433.9 L499.5 432.5 L500.5 433.4 L501.5 433.9 L502.5 434.3 L503.5 434.2 L504.5 434.3 L505.5 434.5 L506.5 434.9 L507.5 434.1 L508.5 434.8 L509.5 435.3 L510.5 435.4 L511.5 434.8 L512.5 435.5 L513.5 435.6 L514.5 435.1 L515.5 435.2 L516.5 434.8 L517.5 435.1 L518.5 435.3 L519.5 434.6 L520.5 435.6 L521.5 436.4 L522.5 436.4 L523.5 436.3 L524.5 435.9 L525.5 436.6 L526.5 436.5 L527.5 436.5 L528.5 437.3 L529.5 436.3 L530.5 437.5 L531.5 436.5 L532.5 437.6 L533.5 437.6 L534.5 437.3 L535.5 438.2 L536.5 438.2 L537.5 438.9 L538.5 439.9 L539.5 439.4 L540.5 439.5 L541.5 440.4 L542.5 440.9 L543.5 439.4 L544.5 438.6 L545.5 439.0 L546.5 436.8 L547.5 433.4 L548.5 429.3 L549.5 424.0 L550.5 418.7 L551.5 414.2 L552.5 410.5 L553.5 406.8 L554.5 404.3 L555.5 403.0 L556.5 401.7 L557.5 400.8 L558.5 400.2 L559.5 399.8 L560.5 399.4 L561.5 399.1 L562.5 398.8 L563.5 398.4 L564.5 398.1 L565.5 397.9 L566.5 397.7 L567.5 397.5 L568.5 397.3 L569.5 397.1 L570.5 397.0 L571.5 397.0 L572.5 397.0 L573.5 397.0 L574.5 397.0 L575.5 397.0 L576.5 397.0 L577.5 397.0 L578.5 397.0 L579.5 397.0 L580.5 397.1 L581.5 397.1 L582.5 397.2 L583.5 397.4 L584.5 397.4 L585.5 397.6 L586.5 397.6 L587.5 397.8 L588.5 397.9 L589.5 397.9 L590.5 398.2 L591.5 398.8 L592.5 399.2 L593.5 399.8 L594.5 400.2 L595.5 400.8 L596.5 401.2 L597.5 402.6 L598.5 404.8 L599.5 406.9 L600.5 409.5 L601.5 412.5 L602.5 415.5 L603.5 418.6 L604.5 421.9 L605.5 425.1 L606.5 428.4 L607.5 431.4 L608.5 434.1 L609.5 436.9 L610.5 439.6 L611.5 441.3 L612.5 441.9 L613.5 442.5 L614.5 443.1 L615.5 443.6 L616.5 444.5 L617.5 445.0 L618.5 445.6 L619.5 446.4 L620.5 446.3 L621.5 446.6 L622.5 447.3 L623.5 448.5 L624.5 447.0 L625.5 448.5 L626.5 444.0 L627.5 446.9 L628.5 439.4 L629.5 448.5 L630.5 449.7 L631.5 448.6 L632.5 449.0 L633.5 448.7 L634.5 449.9 L635.5 449.8 L636.5 448.9 L637.5 449.4 L638.5 453.2 L639.5 453.5 L640.5 452.0 L641.5 453.6 L642.5 454.0 L643.5 455.9 L644.5 455.3 L645.5 455.9 L646.5 453.8 L647.5 445.4 L648.5 456.2 L649.5 456.4 L650.5 455.1 L651.5 456.2 L652.5 452.5 L653.5 454.4 L654.5 455.9 L655.5 455.0 L656.5 458.4 L657.5 459.0 L658.5 455.0 L659.5 447.6 L660.5 456.5 L661.5 457.2 L662.5 457.6 L663.5 460.0 L664.5 455.8 L665.5 460.2 L666.5 456.5 L667.5 456.4 L668.5 457.0 L669.5 457.9 L670.5 456.9 L671.5 459.3 L672.5 459.6 L673.5 459.2 L674.5 458.2 L675.5 460.2 L676.5 462.2 L677.5 462.1 L678.5 459.6 L679.5 463.6 L680.5 459.6 L681.5 459.0 L682.5 463.0 L683.5 457.4 L684.5 464.1 L685.5 462.0 L686.5 463.2 L687.5 452.9 L688.5 463.0 L689.5 461.1 L690.5 460.9 L691.5 463.0 L692.5 463.2 L693.5 455.9 L694.5 462.0 L695.5 463.4 L696.5 454.8 L697.5 465.4 L698.5 463.9 L699.5 467.2 L700.5 467.0 L701.5 466.6 L702.5 467.1 L703.5 466.6 L704.5 463.0 L705.5 462.8 L706.5 466.3 L707.5 466.7 L708.5 466.3 L709.5 468.9 L710.5 467.7 L711.5 467.0 L712.5 460.8 L713.5 464.5 L714.5 467.1 L715.5 467.4 L716.5 461.3 L717.5 464.8 L718.5 467.3 L719.5 458.6 L720.5 467.9 L721.5 466.7 L722.5 466.9 L723.5 465.5 L724.5 466.5 L725.5 470.7 L726.5 471.3 L727.5 471.0 L728.5 471.5 L729.5 471.5 L730.5 471.9 L731.5 467.3 L732.5 460.7 L733.5 469.4 L734.5 468.5 L735.5 471.5 L736.5 472.6 L737.5 468.1 L738.5 471.1 L739.5 471.6 L740.5 471.4 L741.5 469.5 L742.5 468.7 L743.5 470.7 L744.5 467.0 L745.5 471.7 L746.5 471.5 L747.5 473.0 L748.5 469.6 L749.5 473.2 L750.5 470.5 L751.5 472.7 L752.5 472.2 L753.5 471.6 L754.5 469.6 L755.5 472.0 L756.5 468.3 L757.5 469.9 L758.5 473.3 L759.5 471.5 L760.5 470.2 L761.5 474.6 L762.5 472.1 L763.5 471.4 L764.5 474.7 L765.5 471.8 L766.5 472.0 L767.5 474.3 L768.5 473.0 L769.5 474.8 L770.5 472.9 L771.5 475.4 L772.5 470.5 L773.5 462.2 L774.5 470.7 L775.5 474.4 L776.5 471.5 L777.5 474.6 L778.5 475.8 L779.5 473.4 L780.5 475.6 L781.5 474.2 L782.5 475.2 L783.5 474.2 L784.5 475.1 L785.5 471.6 L786.5 472.9 L787.5 473.2 L788.5 471.3 L789.5 474.5 L790.5 471.4 L791.5 471.4 L792.5 472.3 L793.5 474.4 L794.5 472.8 L795.5 473.0 L796.5 474.0 L797.5 476.4 L798.5 476.7 L799.5 471.7 L800.5 473.6 L801.5 473.1 L802.5 466.1 L803.5 476.0 L804.5 472.5 L805.5 473.1 L806.5 475.3 L807.5 474.7 L808.5 471.8 L809.5 470.8 L810.5 472.5 L811.5 477.2 L812.5 473.7 L813.5 468.1 L814.5 475.1 L815.5 476.7 L816.5 472.6 L817.5 476.1 L818.5 472.8 L819.5 477.6 L820.5 472.4 L821.5 473.7 L822.5 472.5 L823.5 473.6 L824.5 474.5 L825.5 474.4 L826.5 474.0 L827.5 474.4 L828.5 476.6 L829.5 473.2 L830.5 476.4 L831.5 475.0 L832.5 473.3 L833.5 473.5 L834.5 477.9 L835.5 476.5 L836.5 475.1 L837.5 473.1 L838.5 478.4 L839.5 470.4 L840.5 476.7 L841.5 476.0 L842.5 476.6 L843.5 478.2 L844.5 476.0 L845.5 478.7 L846.5 478.0 L847.5 476.8 L848.5 474.8 L849.5 475.3 L850.5 476.1 L851.5 474.3 L852.5 476.7 L853.5 478.6 L854.5 476.9 L855.5 475.3 L856.5 476.8 L857.5 472.5 L858.5 479.2 L859.5 475.5 L860.5 475.9 L861.5 473.9 L862.5 474.7 L863.5 474.9 L864.5 477.1 L865.5 474.2 L866.5 479.3 L867.5 476.3 L868.5 478.2 L869.5 479.6 L870.5 476.4 L871.5 479.1 L872.5 476.6 L873.5 474.5 L874.5 478.3 L875.5 475.9 L876.5 475.0 L877.5 468.3 L878.5 475.7 L879.5 466.2 L880.5 478.1 L881.5 478.9 L882.5 477.6 L883.5 478.9 L884.5 474.3 L885.5 467.0 L886.5 476.8 L887.5 465.5 L888.5 477.4 L889.5 477.3 L890.5 479.8 L891.5 479.4 L892.5 475.7 L893.5 475.9 L894.5 475.0 L895.5 476.6 L896.5 478.8 L897.5 480.1 L898.5 476.2 L899.5 476.1 L900.5 478.6 L901.5 478.6 L902.5 476.2 L903.5 478.5 L904.5 475.3 L905.5 477.7 L906.5 478.1 L907.5 473.4 L908.5 476.0 L909.5 475.7 L910.5 474.8 L911.5 476.7 L912.5 475.5 L913.5 476.5 L914.5 477.3 L915.5 478.2 L916.5 475.3 L917.5 477.7 L918.5 478.6 L919.5 475.6 L920.5 477.4 L921.5 477.5 L922.5 479.0 L923.5 474.2 L924.5 476.5 L925.5 474.4 L926.5 477.0 L927.5 474.8 L928.5 475.7 L929.5 475.3 L930.5 478.4 L931.5 474.7 L932.5 471.6 L933.5 474.9 L934.5 476.4 L935.5 474.5 L936.5 473.8 L937.5 474.4 L938.5 471.7 L939.5 477.7 L940.5 474.8 L941.5 475.9 L942.5 475.1 L943.5 473.4 L944.5 473.4 L945.5 477.8 L946.5 475.5 L947.5 474.9 L948.5 474.6 L949.5 473.5 L950.5 475.1 L951.5 477.9 L952.5 473.5 L953.5 476.1 L954.5 472.3 L955.5 474.3 L956.5 473.5 L957.5 477.1 L958.5 475.8 L959.5 473.5 L960.5 476.5 L961.5 468.0 L962.5 471.4 L963.5 470.7 L964.5 472.8 L965.5 470.6 L966.5 469.3 L967.5 471.8 L968.5 471.8 L969.5 467.9 L970.5 465.1 L971.5 468.4 L972.5 466.7 L973.5 465.3 L974.5 464.3 L975.5 458.0 L976.5 455.8 L977.5 455.4 L978.5 451.1 L979.5 448.9 L980.5 443.4 L980.7 500.5Z" fill="#000"/>
<path d="M288.5 500 L533.8 500 C560 497 590 478 610 452 C625 432 637 410 645.4 397" fill="none" stroke="#e02828" stroke-width="2"/>
<path d="M645 397.5 L980.7 397.5" stroke="#d04848" stroke-width="2"/>
<rect x="294.90" y="396.5" width="1.4" height="14" fill="#dadada"/><rect x="302.86" y="396.5" width="1.4" height="14" fill="#dadada"/><rect x="310.82" y="396.5" width="1.4" height="14" fill="#dadada"/><rect x="318.78" y="396.5" width="1.4" height="14" fill="#dadada"/><rect x="326.74" y="396.5" width="1.4" height="14" fill="#dadada"/><rect x="334.70" y="396.5" width="1.4" height="14" fill="#dadada"/><rect x="342.66" y="396.5" width="1.4" height="14" fill="#dadada"/><rect x="350.62" y="396.5" width="1.4" height="14" fill="#dadada"/><rect x="358.58" y="396.5" width="1.4" height="14" fill="#dadada"/><rect x="366.54" y="396.5" width="1.4" height="24.5" fill="#dadada"/><rect x="374.50" y="396.5" width="1.4" height="14" fill="#dadada"/><rect x="382.46" y="396.5" width="1.4" height="14" fill="#dadada"/><rect x="390.42" y="396.5" width="1.4" height="14" fill="#dadada"/><rect x="398.38" y="396.5" width="1.4" height="14" fill="#dadada"/><rect x="406.34" y="396.5" width="1.4" height="14" fill="#dadada"/><rect x="414.30" y="396.5" width="1.4" height="14" fill="#dadada"/><rect x="422.26" y="396.5" width="1.4" height="14" fill="#dadada"/><rect x="430.22" y="396.5" width="1.4" height="14" fill="#dadada"/><rect x="438.18" y="396.5" width="1.4" height="14" fill="#dadada"/><rect x="446.14" y="396.5" width="1.4" height="24.5" fill="#dadada"/><rect x="454.10" y="396.5" width="1.4" height="14" fill="#dadada"/><rect x="462.06" y="396.5" width="1.4" height="14" fill="#dadada"/><rect x="470.02" y="396.5" width="1.4" height="14" fill="#dadada"/><rect x="477.98" y="396.5" width="1.4" height="14" fill="#dadada"/><rect x="485.94" y="396.5" width="1.4" height="14" fill="#dadada"/><rect x="493.90" y="396.5" width="1.4" height="14" fill="#dadada"/><rect x="501.86" y="396.5" width="1.4" height="14" fill="#dadada"/><rect x="509.82" y="396.5" width="1.4" height="14" fill="#dadada"/><rect x="517.78" y="396.5" width="1.4" height="14" fill="#dadada"/><rect x="525.74" y="396.5" width="1.4" height="24.5" fill="#dadada"/><rect x="533.70" y="396.5" width="1.4" height="14" fill="#dadada"/><rect x="541.66" y="396.5" width="1.4" height="14" fill="#dadada"/><rect x="549.62" y="396.5" width="1.4" height="14" fill="#dadada"/><rect x="557.58" y="396.5" width="1.4" height="14" fill="#dadada"/><rect x="565.54" y="396.5" width="1.4" height="14" fill="#dadada"/><rect x="573.50" y="396.5" width="1.4" height="14" fill="#dadada"/><rect x="581.46" y="396.5" width="1.4" height="14" fill="#dadada"/><rect x="589.42" y="396.5" width="1.4" height="14" fill="#dadada"/><rect x="597.38" y="396.5" width="1.4" height="14" fill="#dadada"/><rect x="605.34" y="396.5" width="1.4" height="24.5" fill="#dadada"/><rect x="613.30" y="396.5" width="1.4" height="14" fill="#dadada"/><rect x="621.26" y="396.5" width="1.4" height="14" fill="#dadada"/><rect x="629.22" y="396.5" width="1.4" height="14" fill="#dadada"/><rect x="637.18" y="396.5" width="1.4" height="14" fill="#dadada"/><rect x="645.14" y="396.5" width="1.4" height="14" fill="#dadada"/><rect x="653.10" y="396.5" width="1.4" height="14" fill="#dadada"/><rect x="661.06" y="396.5" width="1.4" height="14" fill="#dadada"/><rect x="669.02" y="396.5" width="1.4" height="14" fill="#dadada"/><rect x="676.98" y="396.5" width="1.4" height="14" fill="#dadada"/><rect x="684.94" y="396.5" width="1.4" height="24.5" fill="#dadada"/><rect x="692.90" y="396.5" width="1.4" height="14" fill="#dadada"/><rect x="700.86" y="396.5" width="1.4" height="14" fill="#dadada"/><rect x="708.82" y="396.5" width="1.4" height="14" fill="#dadada"/><rect x="716.78" y="396.5" width="1.4" height="14" fill="#dadada"/><rect x="724.74" y="396.5" width="1.4" height="14" fill="#dadada"/><rect x="732.70" y="396.5" width="1.4" height="14" fill="#dadada"/><rect x="740.66" y="396.5" width="1.4" height="14" fill="#dadada"/><rect x="748.62" y="396.5" width="1.4" height="14" fill="#dadada"/><rect x="756.58" y="396.5" width="1.4" height="14" fill="#dadada"/><rect x="764.54" y="396.5" width="1.4" height="24.5" fill="#dadada"/><rect x="772.50" y="396.5" width="1.4" height="14" fill="#dadada"/><rect x="780.46" y="396.5" width="1.4" height="14" fill="#dadada"/><rect x="788.42" y="396.5" width="1.4" height="14" fill="#dadada"/><rect x="796.38" y="396.5" width="1.4" height="14" fill="#dadada"/><rect x="804.34" y="396.5" width="1.4" height="14" fill="#dadada"/><rect x="812.30" y="396.5" width="1.4" height="14" fill="#dadada"/><rect x="820.26" y="396.5" width="1.4" height="14" fill="#dadada"/><rect x="828.22" y="396.5" width="1.4" height="14" fill="#dadada"/><rect x="836.18" y="396.5" width="1.4" height="14" fill="#dadada"/><rect x="844.14" y="396.5" width="1.4" height="24.5" fill="#dadada"/><rect x="852.10" y="396.5" width="1.4" height="14" fill="#dadada"/><rect x="860.06" y="396.5" width="1.4" height="14" fill="#dadada"/><rect x="868.02" y="396.5" width="1.4" height="14" fill="#dadada"/><rect x="875.98" y="396.5" width="1.4" height="14" fill="#dadada"/><rect x="883.94" y="396.5" width="1.4" height="14" fill="#dadada"/><rect x="891.90" y="396.5" width="1.4" height="14" fill="#dadada"/><rect x="899.86" y="396.5" width="1.4" height="14" fill="#dadada"/><rect x="907.82" y="396.5" width="1.4" height="14" fill="#dadada"/><rect x="915.78" y="396.5" width="1.4" height="14" fill="#dadada"/><rect x="923.74" y="396.5" width="1.4" height="24.5" fill="#dadada"/><rect x="931.70" y="396.5" width="1.4" height="14" fill="#dadada"/><rect x="939.66" y="396.5" width="1.4" height="14" fill="#dadada"/><rect x="947.62" y="396.5" width="1.4" height="14" fill="#dadada"/><rect x="955.58" y="396.5" width="1.4" height="14" fill="#dadada"/><rect x="963.54" y="396.5" width="1.4" height="14" fill="#dadada"/><rect x="971.50" y="396.5" width="1.4" height="14" fill="#dadada"/>
</svg>
<div class="a" style="left:894px;top:396.5px;width:86.7px;height:16.5px;background:rgba(196,196,196,0.8)"></div>
<div class="s" style="left:904px;top:402px;color:#505050">Reset Adjustments</div>

<!-- STATUS -->
<div class="a" style="left:0;top:515px;width:1000px;height:17px;background:#f0f0f0;border-top:1px solid #d8d8d8"></div>
<div class="t" style="left:3px;top:518.7px;color:#1a1a1a;letter-spacing:-0.53px">Previewing : 5664 frames (0 dropped) in 7:10:09,6721148 at 0,2 fps&nbsp; (currently at 0,3 fps)Exposure ~ 2,6s</div>
<div class="t" style="left:855px;top:518.7px;color:#1a1a1a">Frame:</div>
<div class="a" style="left:884.8px;top:517.5px;width:73.2px;height:12px;border:1px solid #bcbcbc;background:#e6e6e6"></div>
<div class="a" style="left:885.8px;top:518.5px;width:4.6px;height:10px;background:#06b025"></div>
<div class="t" style="left:961px;top:518.7px;color:#1a1a1a">0,5/2,2</div>

</body></html>
